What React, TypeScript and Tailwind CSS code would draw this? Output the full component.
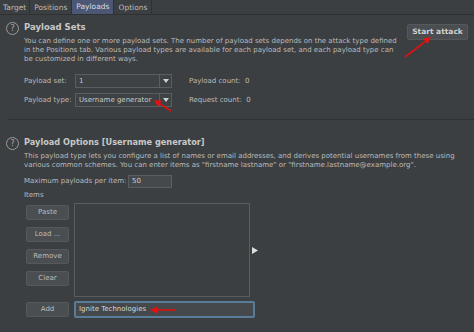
import React from "react";

const font = { fontFamily: '"DejaVu Sans", "Liberation Sans", sans-serif' };

function HelpIcon() {
  return (
    <div className="w-[13px] h-[13px] rounded-full border border-[#9a9a9a] flex items-center justify-center text-[8px] leading-none text-[#aaaaaa]">
      ?
    </div>
  );
}

function Select({ value }: { value: string }) {
  return (
    <div className="flex w-[97px] h-[14px] border border-[#5b5e60] bg-[#3e4244]">
      <div className="flex-1 pl-[3px] text-[7px] leading-[12px] text-[#c8c8c8]">{value}</div>
      <div className="w-[12px] border-l border-[#5b5e60] flex items-center justify-center">
        <svg width="6" height="4" viewBox="0 0 6 4">
          <path d="M0 0 L6 0 L3 4 Z" fill="#d0d0d0" />
        </svg>
      </div>
    </div>
  );
}

function Btn({ label }: { label: string }) {
  return (
    <div className="w-[43px] h-[15px] rounded-[2px] bg-[#4a4e50] border border-[#55595b] flex items-center justify-center text-[7px] text-[#bdbdbd]">
      {label}
    </div>
  );
}

function Arrow({ x1, y1, x2, y2 }: { x1: number; y1: number; x2: number; y2: number }) {
  const a = Math.atan2(y2 - y1, x2 - x1);
  const L = 7;
  const w = 3.5;
  const bx = x2 - L * Math.cos(a);
  const by = y2 - L * Math.sin(a);
  const px = -Math.sin(a) * w;
  const py = Math.cos(a) * w;
  return (
    <g>
      <line x1={x1} y1={y1} x2={bx} y2={by} stroke="#e01010" strokeWidth="1.6" />
      <path d={`M${x2} ${y2} L${bx + px} ${by + py} L${bx - px} ${by - py} Z`} fill="#e81010" />
    </g>
  );
}

export default function App() {
  return (
    <div className="relative w-[474px] h-[332px] overflow-hidden bg-[#3c3f41] text-[#bbbbbb]" style={font}>
      {/* tabs */}
      <div className="flex h-[15px] border-b border-[#2f3133] text-[7.5px]">
        <div className="px-[3px] leading-[15px] border-r border-[#2f3133]">Target</div>
        <div className="px-[4px] leading-[15px] border-r border-[#2f3133]">Positions</div>
        <div className="px-[4px] leading-[14px] bg-[#4b5775] text-[#d8dbe6] border-r border-[#2f3133]">Payloads</div>
        <div className="px-[4px] leading-[15px] border-r border-[#2f3133]">Options</div>
      </div>

      {/* Payload Sets */}
      <div className="flex pl-[6px] pr-[6px] pt-[6px]">
        <div className="w-[18px] pt-[1px]">
          <HelpIcon />
        </div>
        <div className="flex-1">
          <div className="text-[8.5px] font-bold leading-[13px] text-[#c8c8c8]">Payload Sets</div>
          <div className="mt-[3px] whitespace-nowrap text-[7px] leading-[9px]">
            You can define one or more payload sets. The number of payload sets depends on the attack type defined
            <br />
            in the Positions tab. Various payload types are available for each payload set, and each payload type can
            <br />
            be customized in different ways.
          </div>
          <div className="mt-[10px] flex flex-col gap-[5px] text-[7px]">
            <div className="flex items-center">
              <div className="w-[51px]">Payload set:</div>
              <Select value="1" />
              <div className="ml-[17px]">Payload count:&nbsp; 0</div>
            </div>
            <div className="flex items-center">
              <div className="w-[51px]">Payload type:</div>
              <Select value="Username generator" />
              <div className="ml-[17px]">Request count:&nbsp; 0</div>
            </div>
          </div>
        </div>
        <div className="pt-[3px]">
          <div className="w-[61px] h-[16px] rounded-[2px] bg-[#4a4e50] border border-[#55595b] flex items-center justify-center text-[7.5px] font-bold text-[#d0d0d0]">
            Start attack
          </div>
        </div>
      </div>

      <div className="ml-[8px] mt-[12px] border-t border-[#2f3133]" />

      {/* Payload Options */}
      <div className="flex pl-[6px] pr-[6px] pt-[16px]">
        <div className="w-[18px] pt-[1px]">
          <HelpIcon />
        </div>
        <div className="flex-1">
          <div className="text-[8.2px] font-bold leading-[13px] text-[#c8c8c8]">Payload Options [Username generator]</div>
          <div className="mt-[3px] whitespace-nowrap text-[7px] leading-[9px]">
            This payload type lets you configure a list of names or email addresses, and derives potential usernames from these using
            <br />
            various common schemes. You can enter items as "firstname lastname" or "firstname.lastname@example.org".
          </div>
          <div className="mt-[5px] flex items-center text-[7px]">
            <div className="w-[104px]">Maximum payloads per item:</div>
            <div className="w-[44px] h-[13px] border border-[#5b5e60] bg-[#45494b] pl-[3px] leading-[11px] text-[#d0d0d0]">50</div>
          </div>
          <div className="mt-[2px] text-[7px] leading-[10px]">Items</div>
          <div className="mt-[3px] flex">
            <div className="ml-[2px] w-[48px] flex flex-col gap-[7px] pt-[2px]">
              <Btn label="Paste" />
              <Btn label="Load ..." />
              <Btn label="Remove" />
              <Btn label="Clear" />
            </div>
            <div className="w-[176px] h-[94px] border border-[#5a5d5f]" />
            <div className="ml-[2px] flex items-center">
              <svg width="6" height="7" viewBox="0 0 6 7">
                <path d="M0 0 L6 3.5 L0 7 Z" fill="#dddddd" />
              </svg>
            </div>
          </div>
          <div className="mt-[4px] flex items-center">
            <div className="ml-[2px] w-[48px]">
              <Btn label="Add" />
            </div>
            <div className="w-[181px] h-[17px] rounded-[2px] border-2 border-[#5a7c98] bg-[#45494b] pl-[3px] text-[7px] leading-[13px] text-[#d4d4d4]">
              Ignite Technologies
            </div>
          </div>
        </div>
      </div>

      {/* annotation arrows */}
      <svg className="absolute left-0 top-0" width="474" height="332">
        <Arrow x1={405} y1={57} x2={431} y2={37} />
        <Arrow x1={171} y1={111} x2={154} y2={100} />
        <Arrow x1={176} y1={310} x2={150} y2={310} />
      </svg>
    </div>
  );
}
